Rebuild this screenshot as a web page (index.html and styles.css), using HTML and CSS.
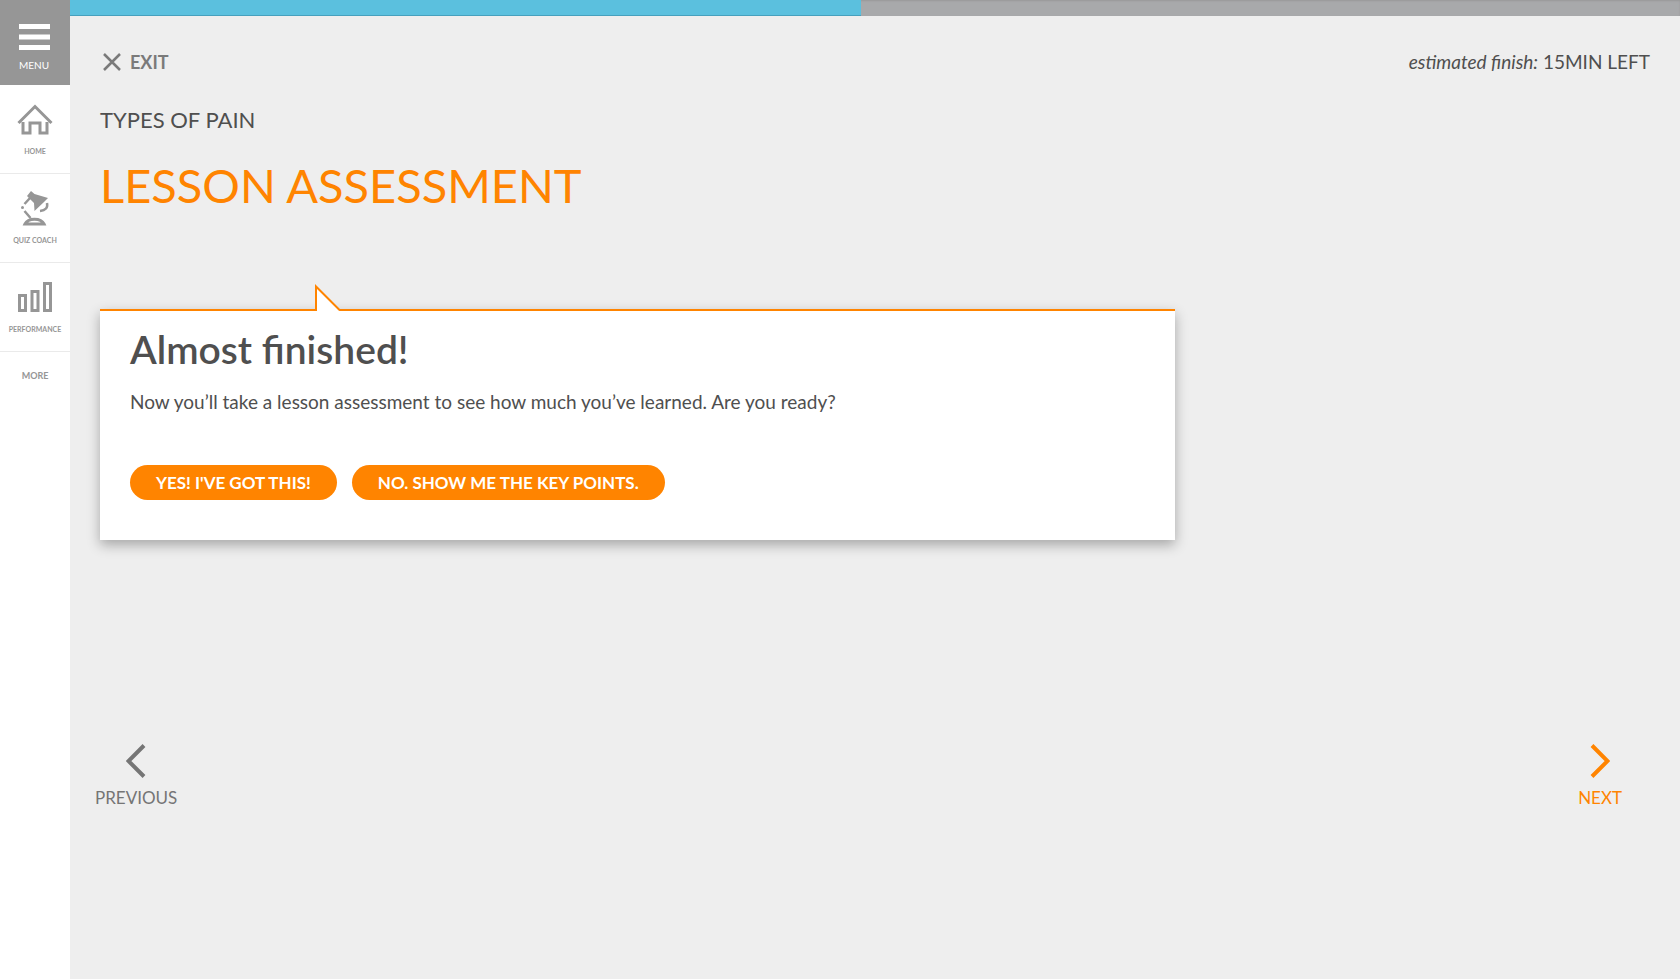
FILE: index.html
```html
<!DOCTYPE html>
<html lang="en">
<head>
<meta charset="utf-8">
<title>Lesson Assessment</title>
<link rel="stylesheet" href="styles.css">
</head>
<body>
<div class="app">
  <nav class="sidebar" aria-label="Main">
    <button class="menu-button" type="button">
      <svg width="32" height="28" viewBox="0 0 32 28" aria-hidden="true"><path d="M1 0h31v5H1zM1 10.500h31v5H1zM1 21h31v5H1z" fill="currentColor"/></svg>
      <span>MENU</span>
    </button>
    <a class="side-link" href="#home">
      <svg width="36" height="34" viewBox="0 0 36 34" aria-hidden="true" fill="none" stroke="currentColor" stroke-width="3"><path d="M1.500 20 18 3.500 34.500 20"/><path d="M6 19v11h7V20h10v10h7V19"/></svg>
      <span>HOME</span>
    </a>
    <a class="side-link" href="#quiz-coach">
      <svg width="36" height="36" viewBox="0 0 36 36" aria-hidden="true">
        <path d="M14 1 17.500 4 31 8 27 12 17.500 21 17 13 10 6z" fill="currentColor"/>
        <circle cx="5.500" cy="17.500" r="1.500" fill="currentColor"/>
        <path d="M13 8 7.500 14M7.500 21l6 7" fill="none" stroke="currentColor" stroke-width="2.500"/>
        <path d="M30 13q1.500 7-7 8" fill="none" stroke="currentColor" stroke-width="2.500"/>
        <path d="M8 34a10 7 0 0 1 19 0z" fill="none" stroke="currentColor" stroke-width="3"/>
      </svg>
      <span>QUIZ COACH</span>
    </a>
    <a class="side-link" href="#performance">
      <svg width="36" height="36" viewBox="0 0 36 36" aria-hidden="true" fill="none" stroke="currentColor" stroke-width="3"><path d="M2.500 16.500h6v15h-6zM15 12.500h6v19h-6zM27.500 4.500h6v27h-6z"/></svg>
      <span>PERFORMANCE</span>
    </a>
    <a class="more-link" href="#more">MORE</a>
  </nav>
  <div class="page">
    <div class="progress" role="progressbar" aria-label="Lesson progress" aria-valuemin="0" aria-valuemax="100" aria-valuenow="49"><div class="progress-fill" style="width:49.1%"></div></div>
    <main class="content">
      <div class="topbar">
        <button class="exit" type="button">
          <svg width="18" height="18" viewBox="0 0 18 18" aria-hidden="true"><path d="M1 1 17 17M17 1 1 17" stroke="currentColor" stroke-width="2.500"/></svg>
          <span>EXIT</span>
        </button>
        <p class="estimate"><em>estimated finish:</em> 15MIN LEFT</p>
      </div>
      <p class="topic">TYPES OF PAIN</p>
      <h1 class="title">LESSON ASSESSMENT</h1>
      <section class="card">
        <svg class="card-pointer" width="26" height="27" viewBox="0 0 26 27" aria-hidden="true"><path d="M2 27V3L25 27z" fill="#fff"/><path d="M1 27V2.500L25 26.500" fill="none" stroke="#ff8400" stroke-width="2"/></svg>
        <h2 class="card-title">Almost finished!</h2>
        <p class="card-text">Now you’ll take a lesson assessment to see how much you’ve learned. Are you ready?</p>
        <div class="actions">
          <button class="pill" type="button">YES! I'VE GOT THIS!</button>
          <button class="pill" type="button">NO. SHOW ME THE KEY POINTS.</button>
        </div>
      </section>
      <nav class="pager" aria-label="Lesson pages">
        <a class="pager-link" href="#previous">
          <svg width="20" height="34" viewBox="0 0 20 34" aria-hidden="true"><path d="M18 1.500 2.500 17 18 32.500" fill="none" stroke="currentColor" stroke-width="4"/></svg>
          <span>PREVIOUS</span>
        </a>
        <a class="pager-link pager-next" href="#next">
          <svg width="20" height="34" viewBox="0 0 20 34" aria-hidden="true"><path d="M2 1.500 17.500 17 2 32.500" fill="none" stroke="currentColor" stroke-width="4"/></svg>
          <span>NEXT</span>
        </a>
      </nav>
    </main>
  </div>
</div>
</body>
</html>
```
FILE: styles.css
```css
* { box-sizing: border-box; }
body {
  margin: 0;
  background: #eee;
  color: #4f4f4f;
  font-family: Lato, "Open Sans", sans-serif;
}
h1, h2, p { margin: 0; font-weight: 400; }
a { text-decoration: none; }
button { border: 0; padding: 0; background: none; font: inherit; cursor: pointer; }
svg { display: block; }

.app { display: flex; min-height: 100vh; }

.sidebar {
  display: flex;
  flex-direction: column;
  flex: 0 0 70px;
  background: #fff;
  color: #969696;
}
.menu-button {
  display: flex;
  flex-direction: column;
  align-items: center;
  gap: 7px;
  height: 85px;
  padding: 24px 2px 0 0;
  background: #969696;
  color: #fff;
  font-size: 10px;
  line-height: 12px;
}
.side-link {
  display: flex;
  flex-direction: column;
  align-items: center;
  justify-content: flex-end;
  gap: 9px;
  height: 89px;
  padding-bottom: 17px;
  border-bottom: 1px solid #eaeaea;
  color: inherit;
  font-size: 7px;
  font-weight: 700;
  line-height: 10px;
}
.more-link {
  padding-top: 18px;
  color: inherit;
  font-size: 9px;
  font-weight: 700;
  line-height: 12px;
  text-align: center;
}

.page { display: flex; flex: 1; flex-direction: column; min-width: 0; }
.progress { height: 16px; background: #a8a9ab; box-shadow: inset 0 1px 2px #999; }
.progress-fill { height: 100%; background: #5bc0de; border-bottom: 1px solid #46a0bd; }

.content { padding: 32px 30px; }
.topbar { display: flex; align-items: center; justify-content: space-between; height: 28px; }
.exit {
  display: flex;
  align-items: center;
  gap: 9px;
  padding-left: 3px;
  color: #7a7a7a;
  font-size: 18px;
  font-weight: 700;
}
.estimate { font-size: 19px; line-height: 28px; }
.topic { margin-top: 28px; font-size: 22px; line-height: 32px; }
.title { margin-top: 19px; color: #ff8400; font-size: 47px; line-height: 60px; }

.card {
  position: relative;
  width: 69.36%;
  margin-top: 94px;
  padding: 18px 30px 40px;
  background: #fff;
  border-top: 2px solid #ff8400;
  box-shadow: 0 5px 12px rgba(0, 0, 0, 0.3);
}
.card-pointer { position: absolute; left: 20%; bottom: 100%; }
.card-title { font-size: 39px; font-weight: 600; line-height: 40px; }
.card-text { margin-top: 19px; font-size: 19px; line-height: 28px; }
.actions { display: flex; flex-wrap: wrap; gap: 15px; margin-top: 49px; }
.pill {
  height: 35px;
  padding: 0 26px;
  border-radius: 18px;
  background: #ff8400;
  color: #fff;
  font-size: 17px;
  font-weight: 700;
}

.pager { display: flex; justify-content: space-between; margin: 204px 28px 0 -5px; }
.pager-link {
  display: flex;
  flex-direction: column;
  align-items: center;
  gap: 10px;
  color: #757575;
  font-size: 17px;
  line-height: 20px;
}
.pager-next { color: #ff8400; }
```
